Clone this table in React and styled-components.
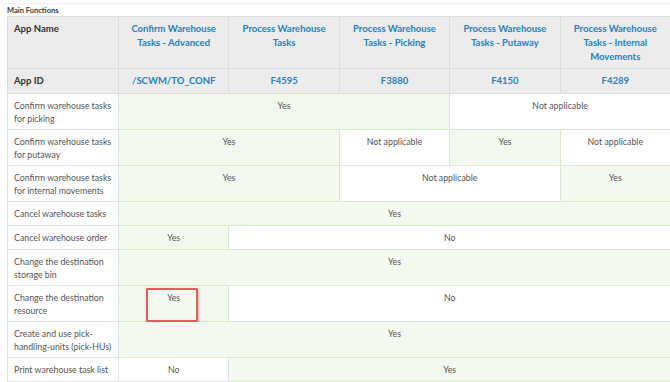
import React from "react";
import styled, { createGlobalStyle } from "styled-components";

const GlobalStyle = createGlobalStyle`
  html, body {
    margin: 0;
    padding: 0;
    background: #ffffff;
  }
  body {
    font-family: Lato, "Noto Sans", sans-serif;
    overflow: hidden;
  }
`;

const apps = [
  { name: ["Confirm Warehouse", "Tasks - Advanced"], id: "/SCWM/TO_CONF" },
  { name: ["Process Warehouse", "Tasks"], id: "F4595" },
  { name: ["Process Warehouse", "Tasks - Picking"], id: "F3880" },
  { name: ["Process Warehouse", "Tasks - Putaway"], id: "F4150" },
  { name: ["Process Warehouse", "Tasks - Internal", "Movements"], id: "F4289" },
];

// each cell: [text, span, supported, highlighted]
const rows = [
  {
    label: ["Confirm warehouse tasks", "for picking"],
    cells: [["Yes", 3, true], ["Not applicable", 2, false]],
  },
  {
    label: ["Confirm warehouse tasks", "for putaway"],
    cells: [
      ["Yes", 2, true],
      ["Not applicable", 1, false],
      ["Yes", 1, true],
      ["Not applicable", 1, false],
    ],
  },
  {
    label: ["Confirm warehouse tasks", "for internal movements"],
    cells: [["Yes", 2, true], ["Not applicable", 2, false], ["Yes", 1, true]],
  },
  { label: ["Cancel warehouse tasks"], cells: [["Yes", 5, true]] },
  {
    label: ["Cancel warehouse order"],
    cells: [["Yes", 1, true], ["No", 4, false]],
  },
  {
    label: ["Change the destination", "storage bin"],
    cells: [["Yes", 5, true]],
  },
  {
    label: ["Change the destination", "resource"],
    cells: [["Yes", 1, true, true], ["No", 4, false]],
  },
  {
    label: ["Create and use pick-", "handling-units (pick-HUs)"],
    cells: [["Yes", 5, true]],
  },
  {
    label: ["Print warehouse task list"],
    cells: [["No", 1, false], ["Yes", 4, true]],
  },
];

const Lines = ({ lines }) =>
  lines.map((l, i) => (
    <React.Fragment key={i}>
      {i > 0 && <br />}
      {l}
    </React.Fragment>
  ));

export default function App() {
  return (
    <>
      <GlobalStyle />
      <Page>
        <Title>Main Functions</Title>
        <Table>
          <colgroup>
            <col style={{ width: 111 }} />
            {apps.map((a) => (
              <col key={a.id} />
            ))}
          </colgroup>
          <thead>
            <tr>
              <HeadLabel>App Name</HeadLabel>
              {apps.map((a) => (
                <HeadCell key={a.id}>
                  <Lines lines={a.name} />
                </HeadCell>
              ))}
            </tr>
            <tr>
              <HeadLabel $short>App ID</HeadLabel>
              {apps.map((a) => (
                <HeadCell key={a.id} $short>
                  {a.id}
                </HeadCell>
              ))}
            </tr>
          </thead>
          <tbody>
            {rows.map((r, i) => (
              <Row key={i}>
                <Label>
                  <Lines lines={r.label} />
                </Label>
                {r.cells.map(([text, span, ok, marked], j) => (
                  <Cell key={j} colSpan={span} $ok={ok}>
                    {text}
                    {marked && <Marker />}
                  </Cell>
                ))}
              </Row>
            ))}
          </tbody>
        </Table>
      </Page>
    </>
  );
}

const Page = styled.div`
  margin-top: 3px;
  border-top: 1px solid #efefef;
  padding: 2px 0 0 7px;
`;

const Title = styled.div`
  font-size: 7.5px;
  font-weight: 700;
  color: #3a3a3a;
  line-height: 10px;
  height: 10px;
`;

const Table = styled.table`
  border-collapse: collapse;
  table-layout: fixed;
  width: 664px;
`;

const Row = styled.tr`
  height: 24px;
`;

const HeadCell = styled.th`
  background: #ececec;
  border: 1px solid #dcdcdc;
  color: #2a7fbe;
  font-size: 9.5px;
  font-weight: 700;
  text-align: center;
  vertical-align: top;
  line-height: 14px;
  padding: ${(p) => (p.$short ? "5px 6px 5px" : "5px 6px 4px")};
  height: ${(p) => (p.$short ? "14px" : "42px")};
`;

const HeadLabel = styled(HeadCell)`
  color: #333333;
  text-align: left;
`;

const Label = styled.td`
  background: #ffffff;
  border: 1px solid #e2e2e2;
  color: #555555;
  font-size: 8.8px;
  line-height: 13px;
  padding: 5px 6px 4px;
  vertical-align: top;
  white-space: nowrap;
`;

const Cell = styled.td`
  position: relative;
  background: ${(p) => (p.$ok ? "#f4f9f0" : "#ffffff")};
  border: 1px solid ${(p) => (p.$ok ? "#d8ecca" : "#e2e2e2")};
  color: #555555;
  font-size: 8.8px;
  line-height: 13px;
  padding: 5px 6px 4px;
  text-align: center;
  vertical-align: top;
`;

const Marker = styled.span`
  position: absolute;
  left: 27px;
  top: 2px;
  width: 48px;
  height: 30px;
  border: 2px solid #e35d5d;
  border-radius: 1px;
  box-shadow: 1px 1px 3px rgba(0, 0, 0, 0.25);
`;
